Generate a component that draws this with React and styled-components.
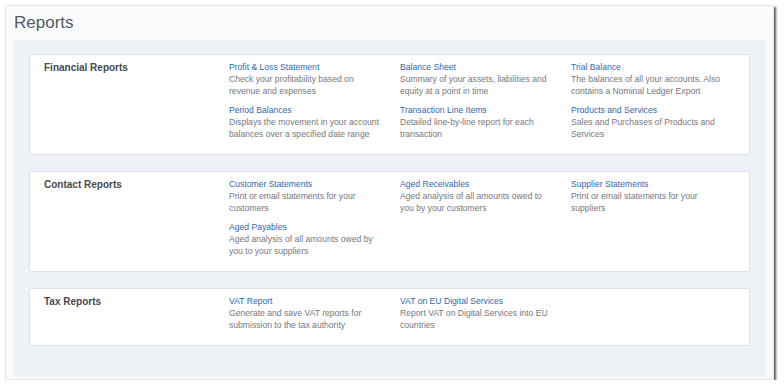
import React from "react";
import styled, { createGlobalStyle } from "styled-components";

const Global = createGlobalStyle`
  html, body { margin: 0; padding: 0; background: #ffffff; }
  body { font-family: "Liberation Sans", Arial, sans-serif; }
`;

const Frame = styled.div`
  margin: 5px 0 0 5px;
  width: 769px;
  height: 375px;
  border: 1px solid #e4e6ea;
  background: #f9fafb;
  box-shadow: 2px 2px 2px rgba(40, 40, 40, 0.75);
  padding: 0 8px;
  box-sizing: border-box;
  display: flex;
  flex-direction: column;
`;

const Title = styled.h1`
  margin: 0;
  height: 34px;
  padding-top: 7px;
  box-sizing: border-box;
  font-size: 17px;
  line-height: 20px;
  font-weight: 400;
  color: #555a60;
`;

const Content = styled.div`
  flex: 0 0 auto;
  height: 337px;
  background: #eef1f6;
  padding: 14px 15px;
  box-sizing: border-box;
  display: flex;
  flex-direction: column;
  gap: 16px;
`;

const Card = styled.section`
  background: #ffffff;
  border: 1px solid #dde2ea;
  border-radius: 2px;
  padding: 6px 8px 14px 14px;
  display: grid;
  grid-template-columns: 185px 171px 171px 171px;
  row-gap: 7px;
`;

const CardTitle = styled.h2`
  margin: 0;
  grid-column: 1;
  grid-row: 1;
  font-size: 10px;
  line-height: 14px;
  font-weight: 700;
  color: #474a4f;
`;

const Item = styled.div`
  width: 155px;
  display: flex;
  flex-direction: column;
  &:nth-of-type(3n + 1) {
    grid-column-start: 2;
  }
`;

const ItemLink = styled.a`
  font-size: 8.6px;
  line-height: 12px;
  color: #2f69ad;
  text-decoration: none;
  cursor: pointer;
`;

const ItemDesc = styled.p`
  margin: 0;
  font-size: 8.6px;
  line-height: 12px;
  color: #75787c;
`;

const sections = [
  {
    title: "Financial Reports",
    items: [
      ["Profit & Loss Statement", "Check your profitability based on revenue and expenses"],
      ["Balance Sheet", "Summary of your assets, liabilities and equity at a point in time"],
      ["Trial Balance", "The balances of all your accounts. Also contains a Nominal Ledger Export"],
      ["Period Balances", "Displays the movement in your account balances over a specified date range"],
      ["Transaction Line Items", "Detailed line-by-line report for each transaction"],
      ["Products and Services", "Sales and Purchases of Products and Services"],
    ],
  },
  {
    title: "Contact Reports",
    items: [
      ["Customer Statements", "Print or email statements for your customers"],
      ["Aged Receivables", "Aged analysis of all amounts owed to you by your customers"],
      ["Supplier Statements", "Print or email statements for your suppliers"],
      ["Aged Payables", "Aged analysis of all amounts owed by you to your suppliers"],
    ],
  },
  {
    title: "Tax Reports",
    items: [
      ["VAT Report", "Generate and save VAT reports for submission to the tax authority"],
      ["VAT on EU Digital Services", "Report VAT on Digital Services into EU countries"],
    ],
  },
];

export default function App() {
  return (
    <>
      <Global />
      <Frame>
        <Title>Reports</Title>
        <Content>
          {sections.map((s) => (
            <Card key={s.title}>
              <CardTitle>{s.title}</CardTitle>
              {s.items.map(([name, desc]) => (
                <Item key={name}>
                  <ItemLink>{name}</ItemLink>
                  <ItemDesc>{desc}</ItemDesc>
                </Item>
              ))}
            </Card>
          ))}
        </Content>
      </Frame>
    </>
  );
}
